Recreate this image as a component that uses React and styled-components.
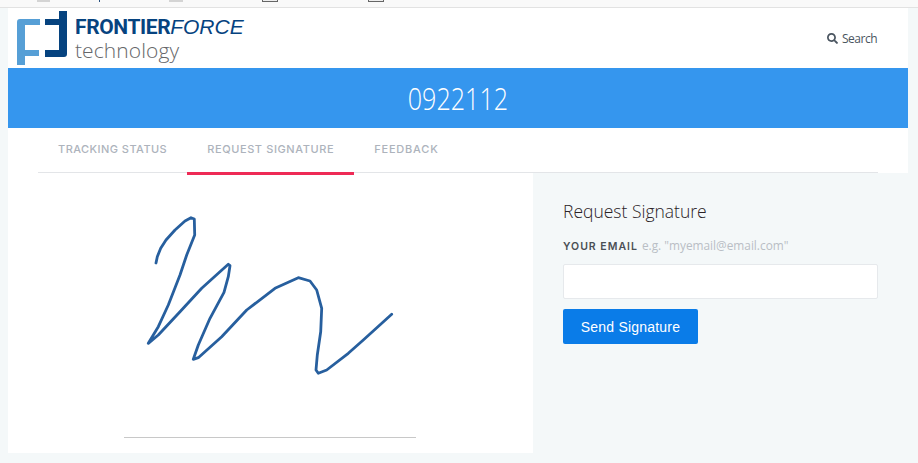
import React from "react";
import styled, { createGlobalStyle } from "styled-components";
import { FaSearch } from "react-icons/fa";

const GlobalStyle = createGlobalStyle`
  html, body {
    margin: 0;
    padding: 0;
    background: #f4f8f9;
  }
  * {
    box-sizing: border-box;
  }
`;

const Page = styled.div`
  width: 918px;
  height: 463px;
  overflow: hidden;
  background: #f4f8f9;
`;

const BrowserStrip = styled.div`
  height: 8px;
  display: flex;
  align-items: flex-start;
  background: #f9f9f9;
  border-bottom: 1px solid #e2e2e2;
`;

const StripMark = styled.span`
  display: block;
  flex: none;
  width: ${(p) => p.$width}px;
  height: 2px;
  margin-left: ${(p) => p.$offset}px;
  background: ${(p) => p.$color || "#d4d4d4"};
`;

const StripBox = styled.span`
  display: block;
  flex: none;
  width: 16px;
  height: 2px;
  margin-left: ${(p) => p.$offset}px;
  background: #eee;
  border: 1px solid #666;
  border-top: none;
`;

const Shell = styled.div`
  margin: 0 10px 0 8px;
`;

const Header = styled.header`
  height: 60px;
  background: #fff;
  display: flex;
  align-items: flex-start;
  justify-content: space-between;
  padding: 3px 31px 0 9px;
`;

const Logo = styled.div`
  display: flex;
  align-items: flex-start;
  gap: 8px;
`;

const LogoWords = styled.div`
  display: flex;
  flex-direction: column;
  padding-top: 5px;
`;

const LogoTop = styled.div`
  font-size: 21px;
  line-height: 22px;
  color: #06437f;
  white-space: nowrap;
`;

const LogoBold = styled.span`
  font-family: Roboto, sans-serif;
  font-weight: 700;
  letter-spacing: -0.4px;
`;

const LogoItalic = styled.span`
  font-family: "Liberation Sans", Arial, sans-serif;
  font-style: italic;
`;

const LogoBottom = styled.div`
  font-family: "Open Sans", sans-serif;
  font-weight: 300;
  font-size: 21px;
  line-height: 24px;
  color: #66676a;
  letter-spacing: 0.1px;
`;

const SearchLink = styled.a`
  display: flex;
  align-items: center;
  gap: 4px;
  margin-top: 19px;
  font-family: "Open Sans", sans-serif;
  font-size: 12px;
  letter-spacing: -0.5px;
  color: #4a5560;
`;

const Banner = styled.div`
  height: 60px;
  background: #3596ee;
  display: flex;
  align-items: center;
  justify-content: center;
  font-family: "Open Sans", sans-serif;
  font-weight: 300;
  font-size: 31px;
  color: #fff;
`;

const BannerText = styled.span`
  display: block;
  transform: scaleX(0.81);
`;

const TabBar = styled.nav`
  height: 45px;
  background: #fff;
  padding: 0 30px;
`;

const TabList = styled.div`
  height: 45px;
  display: flex;
  border-bottom: 1px solid #e3e5e8;
`;

const Tab = styled.div`
  position: relative;
  z-index: 1;
  padding: 0 20px 2px;
  display: flex;
  align-items: center;
  font-family: Inter, sans-serif;
  font-weight: 500;
  font-size: 11px;
  letter-spacing: ${(p) => p.$tracking}px;
  color: #adb3bc;
  white-space: nowrap;

  &::after {
    content: "";
    display: ${(p) => (p.$active ? "block" : "none")};
    position: absolute;
    left: 0;
    right: 0;
    bottom: -3px;
    height: 3px;
    background: #ee2a56;
  }
`;

const Content = styled.div`
  display: flex;
  height: 280px;
`;

const SignaturePanel = styled.section`
  width: 525px;
  background: #fff;
  display: flex;
  flex-direction: column;
  align-items: center;
  padding: 32px 1px 0 0;
`;

const SignatureSvg = styled.svg`
  display: block;
  margin-bottom: 52px;
`;

const SignatureLine = styled.div`
  width: 292px;
  height: 1px;
  background: #c8c8c8;
`;

const FormPanel = styled.section`
  flex: 1;
  padding: 26px 30px 0 30px;
`;

const FormTitle = styled.h2`
  margin: 0;
  font-family: "Open Sans", sans-serif;
  font-weight: 300;
  font-size: 17.5px;
  line-height: 24px;
  color: #2a2226;
`;

const LabelRow = styled.div`
  margin-top: 14px;
  display: flex;
  align-items: baseline;
  gap: 4px;
  height: 16px;
  white-space: nowrap;
`;

const Label = styled.label`
  font-family: Inter, sans-serif;
  font-weight: 600;
  font-size: 10.5px;
  letter-spacing: 1px;
  color: #4a4f55;
`;

const Hint = styled.span`
  font-family: "Open Sans", sans-serif;
  font-size: 11.85px;
  color: #b9bec5;
`;

const EmailInput = styled.input`
  display: block;
  width: 315px;
  height: 35px;
  margin-top: 11px;
  background: #fff;
  border: 1px solid #e6e9ec;
  border-radius: 2px;
  outline: none;
`;

const SendButton = styled.button`
  display: block;
  width: 135px;
  height: 35px;
  margin-top: 10px;
  padding: 0;
  background: #0a7ce8;
  border: none;
  border-radius: 2px;
  color: #fff;
  font-family: "Liberation Sans", Arial, sans-serif;
  font-size: 14px;
  letter-spacing: 0.2px;
`;

function LogoMark() {
  return (
    <svg width="50" height="54" viewBox="0 0 50 54">
      <path
        d="M23 8 V14 H8 V39 H22 V45 H8 V54 H0 V11 a3 3 0 0 1 3 -3 Z"
        fill="#569fd6"
      />
      <path
        d="M28 8 H42 V0 H50 V43 a3 3 0 0 1 -3 3 H28 V39 H42 V14 H28 Z"
        fill="#06437f"
      />
    </svg>
  );
}

const SIGNATURE_PATH =
  "M156 263 L157.3 256.7 L160.7 248.3 L166 240 L175 230 L185 221 L191 217.7 L194.3 219 L194.7 235 L186.7 255 L180 275 L168.3 305 L158.3 326.7 L148.3 343.3 L158.3 335 L180 311.7 L201.7 288.3 L218.3 273.3 L228.3 264.3 L230 265.7 L228.3 276.7 L224 292.3 L210 318.3 L198.3 345 L193.3 359.3 L198.3 357.7 L221.7 336.7 L246.7 310 L275 288.3 L298.3 277.7 L310 281 L316.7 290 L321.7 308.3 L320.7 331.7 L317.3 355 L316 370 L318.3 373.3 L326.7 370 L348.3 353.3 L363.3 340 L391.7 314.3";

function Signature() {
  return (
    <SignatureSvg width="280" height="180" viewBox="130 205 280 180">
      <path
        d={SIGNATURE_PATH}
        fill="none"
        stroke="#275f9e"
        strokeWidth="2.8"
        strokeLinecap="round"
        strokeLinejoin="round"
      />
    </SignatureSvg>
  );
}

export default function App() {
  return (
    <Page>
      <GlobalStyle />
      <BrowserStrip>
        <StripMark $offset={37} $width={13} />
        <StripMark $offset={49} $width={1} $color="#27507f" />
        <StripMark $offset={69} $width={14} />
        <StripBox $offset={79} />
        <StripBox $offset={90} />
      </BrowserStrip>
      <Shell>
        <Header>
          <Logo>
            <LogoMark />
            <LogoWords>
              <LogoTop>
                <LogoBold>FRONTIER</LogoBold>
                <LogoItalic>FORCE</LogoItalic>
              </LogoTop>
              <LogoBottom>technology</LogoBottom>
            </LogoWords>
          </Logo>
          <SearchLink>
            <FaSearch size={11} />
            Search
          </SearchLink>
        </Header>
        <Banner>
          <BannerText>0922112</BannerText>
        </Banner>
        <TabBar>
          <TabList>
            <Tab $tracking={0.45}>TRACKING STATUS</Tab>
            <Tab $active $tracking={0.6}>REQUEST SIGNATURE</Tab>
            <Tab $tracking={0.8}>FEEDBACK</Tab>
          </TabList>
        </TabBar>
        <Content>
          <SignaturePanel>
            <Signature />
            <SignatureLine />
          </SignaturePanel>
          <FormPanel>
            <FormTitle>Request Signature</FormTitle>
            <LabelRow>
              <Label>YOUR EMAIL</Label>
              <Hint>e.g. "myemail@email.com"</Hint>
            </LabelRow>
            <EmailInput type="text" />
            <SendButton>Send Signature</SendButton>
          </FormPanel>
        </Content>
      </Shell>
    </Page>
  );
}
